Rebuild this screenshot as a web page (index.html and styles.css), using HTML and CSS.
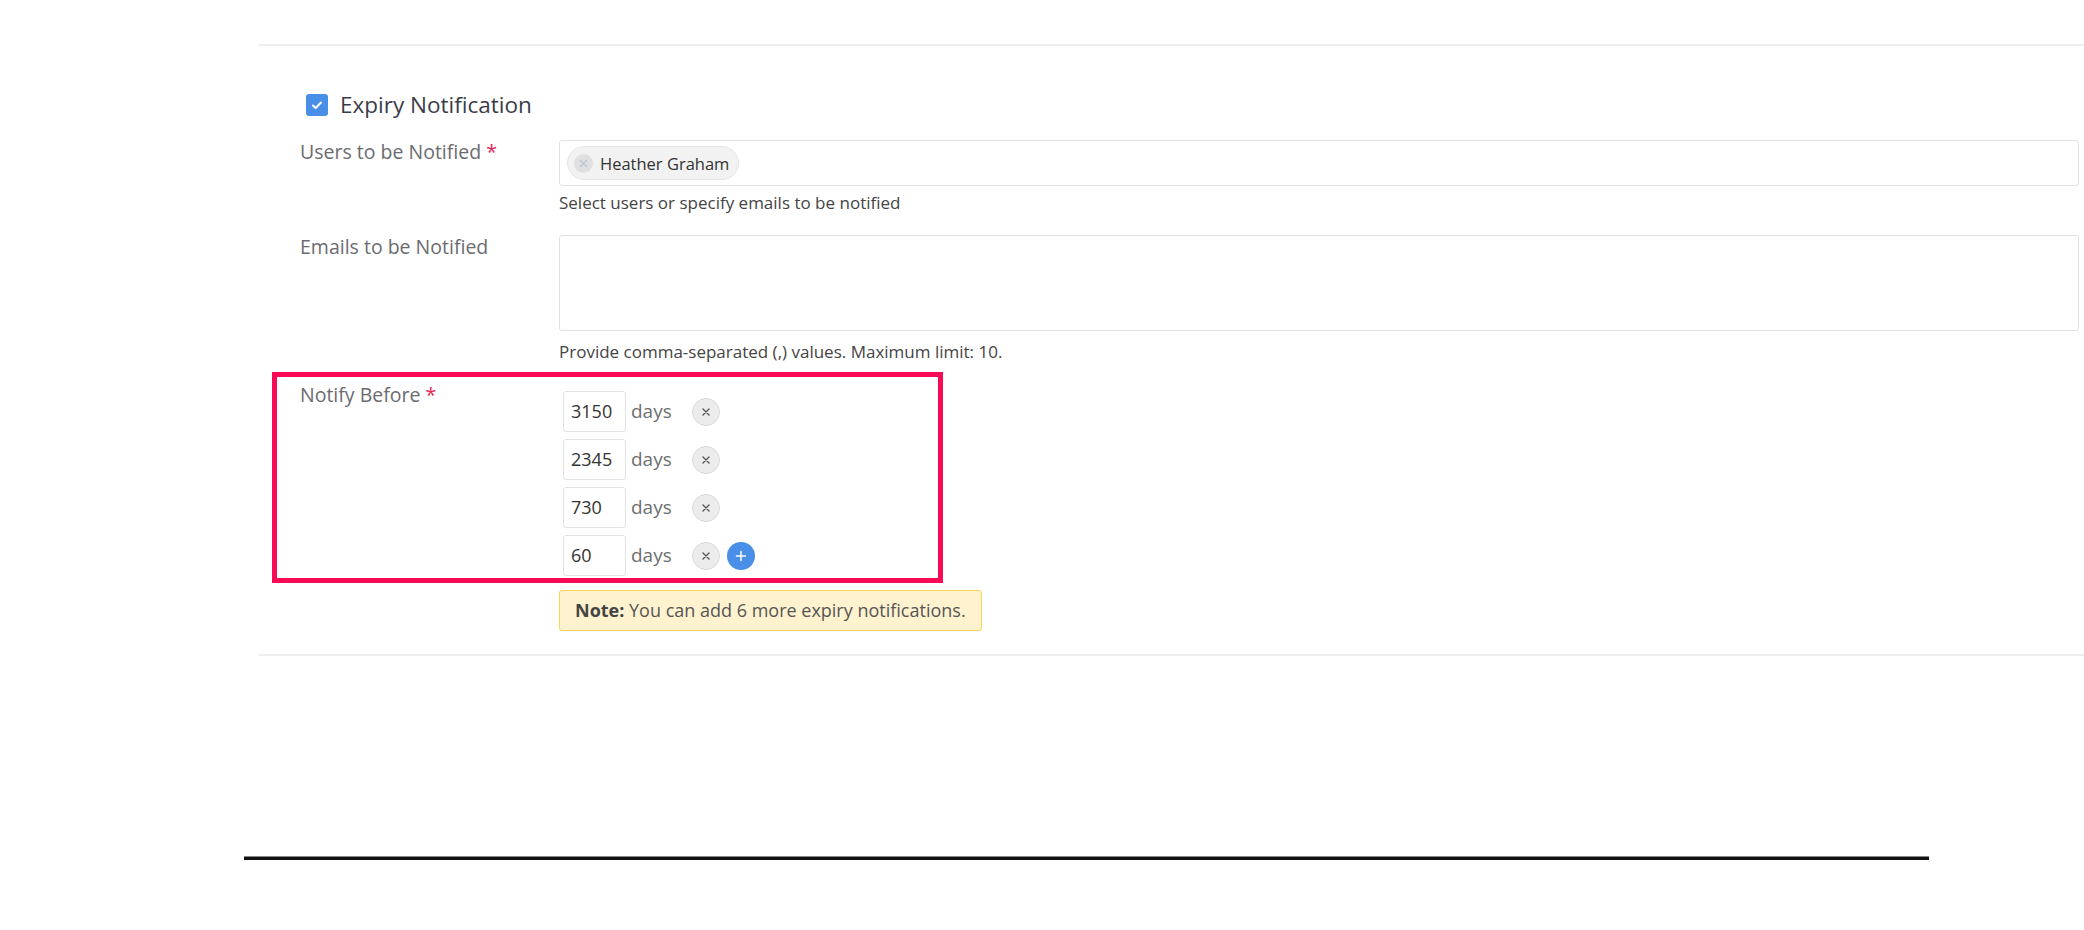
FILE: index.html
```html
<!DOCTYPE html>
<html lang="en">
<head>
    <meta charset="UTF-8">
    <meta name="viewport" content="width=device-width, initial-scale=1.0">
    <title>Expiry Notification</title>
    <link rel="stylesheet" href="styles.css">
</head>
<body>
    <div class="section">
        <div class="title-row">
            <span class="checkbox">
                <svg width="14" height="14" viewBox="0 0 14 14" fill="none" stroke="#fff" stroke-width="2" stroke-linecap="round" stroke-linejoin="round"><path d="M3 7.5l2.6 2.6L11 4.5"/></svg>
            </span>
            <span class="title">Expiry Notification</span>
        </div>

        <div class="field-row">
            <div class="label">Users to be Notified <span class="req">*</span></div>
            <div class="field">
                <div class="input chips">
                    <span class="chip">
                        <span class="chip-close">
                            <svg width="9" height="9" viewBox="0 0 9 9" stroke="#b9c6d3" stroke-width="1.4" stroke-linecap="round"><path d="M1.5 1.5l6 6M7.5 1.5l-6 6"/></svg>
                        </span>
                        Heather Graham
                    </span>
                </div>
                <div class="help">Select users or specify emails to be notified</div>
            </div>
        </div>

        <div class="field-row">
            <div class="label">Emails to be Notified</div>
            <div class="field">
                <div class="input textarea"></div>
                <div class="help help-wide">Provide comma-separated (,) values. Maximum limit: 10.</div>
            </div>
        </div>

        <div class="field-row notify-row">
            <div class="label">Notify Before <span class="req">*</span></div>
            <div class="field days-list">
                <div class="days-row">
                    <input class="num" type="text" value="3150">
                    <span class="unit">days</span>
                    <span class="round-btn remove"><svg width="10" height="10" viewBox="0 0 10 10" stroke="#555" stroke-width="1.3" stroke-linecap="round"><path d="M2 2l6 6M8 2l-6 6"/></svg></span>
                </div>
                <div class="days-row">
                    <input class="num" type="text" value="2345">
                    <span class="unit">days</span>
                    <span class="round-btn remove"><svg width="10" height="10" viewBox="0 0 10 10" stroke="#555" stroke-width="1.3" stroke-linecap="round"><path d="M2 2l6 6M8 2l-6 6"/></svg></span>
                </div>
                <div class="days-row">
                    <input class="num" type="text" value="730">
                    <span class="unit">days</span>
                    <span class="round-btn remove"><svg width="10" height="10" viewBox="0 0 10 10" stroke="#555" stroke-width="1.3" stroke-linecap="round"><path d="M2 2l6 6M8 2l-6 6"/></svg></span>
                </div>
                <div class="days-row">
                    <input class="num" type="text" value="60">
                    <span class="unit">days</span>
                    <span class="round-btn remove"><svg width="10" height="10" viewBox="0 0 10 10" stroke="#555" stroke-width="1.3" stroke-linecap="round"><path d="M2 2l6 6M8 2l-6 6"/></svg></span>
                    <span class="round-btn add"><svg width="12" height="12" viewBox="0 0 12 12" stroke="#fff" stroke-width="1.5" stroke-linecap="round"><path d="M6 1.5v9M1.5 6h9"/></svg></span>
                </div>
            </div>
            <div class="highlight"></div>
        </div>

        <div class="field-row note-row">
            <div></div>
            <div class="field">
                <div class="note"><b>Note:</b> You can add 6 more expiry notifications.</div>
            </div>
        </div>
    </div>

    <div class="rule"></div>
</body>
</html>
```

FILE: styles.css
```css
body {
    margin: 0;
    font-family: "Open Sans", "Noto Sans", sans-serif;
    background: #fff;
    color: #333;
}

.section {
    margin-left: 259px;
    margin-top: 44px;
    border-top: 2px solid #eeeeee;
    border-bottom: 2px solid #eeeeee;
    padding: 46px 5px 23px 41px;
}

.title-row {
    display: flex;
    align-items: center;
    height: 26px;
    padding-left: 6px;
    gap: 12px;
}

.checkbox {
    width: 22px;
    height: 22px;
    border-radius: 3px;
    background: #4a8fe7;
    display: flex;
    align-items: center;
    justify-content: center;
}

.title {
    font-size: 22.5px;
    line-height: 26px;
    color: #3b3c4a;
}

.field-row {
    display: grid;
    grid-template-columns: 259px 1fr;
    margin-top: 22px;
}

.label {
    font-size: 19.5px;
    line-height: 22px;
    padding-top: 1px;
    color: #6b6b70;
}

.req {
    color: #e8265a;
}

.input {
    border: 1px solid #e2e2e2;
    border-radius: 3px;
    box-sizing: border-box;
}

.chips {
    height: 46px;
    padding: 5px 7px;
    display: flex;
    align-items: center;
}

.chip {
    display: inline-flex;
    align-items: center;
    gap: 7px;
    height: 34px;
    box-sizing: border-box;
    padding: 0 9px 0 6px;
    background: #f2f2f2;
    border: 1px solid #e6e6e6;
    border-radius: 17px;
    font-size: 16.5px;
    color: #333;
}

.chip-close {
    width: 19px;
    height: 19px;
    border-radius: 50%;
    background: #e0e0e0;
    display: flex;
    align-items: center;
    justify-content: center;
}

.textarea {
    height: 96px;
}

.help {
    margin-top: 7px;
    font-size: 17px;
    line-height: 20px;
    color: #444;
}

.help-wide {
    margin-top: 11px;
}

.notify-row {
    position: relative;
}

.notify-row .label {
    padding-top: 0;
}

.days-list {
    padding-top: 7px;
}

.days-row {
    display: flex;
    align-items: center;
    height: 41px;
    margin-bottom: 7px;
}

.days-row:last-child {
    margin-bottom: 0;
}

.num {
    width: 63px;
    height: 41px;
    box-sizing: border-box;
    border: 1px solid #e3e3e3;
    border-radius: 3px;
    padding: 0 0 2px 7px;
    margin: 0 0 0 4px;
    font-family: inherit;
    font-size: 18px;
    color: #333;
    outline: none;
}

.unit {
    margin-left: 5px;
    width: 61px;
    font-size: 19px;
    color: #6f6f6f;
    padding-bottom: 2px;
}

.round-btn {
    width: 28px;
    height: 28px;
    box-sizing: border-box;
    border-radius: 50%;
    display: flex;
    align-items: center;
    justify-content: center;
}

.remove {
    background: #ececec;
    border: 1px solid #dadada;
}

.add {
    margin-left: 7px;
    background: #4a8fe7;
}

.highlight {
    position: absolute;
    left: -28px;
    top: -12px;
    width: 671px;
    height: 211px;
    box-sizing: border-box;
    border: 5px solid #fa0a55;
    pointer-events: none;
}

.note-row {
    margin-top: 0;
}

.note {
    display: inline-block;
    margin-top: 14px;
    height: 41px;
    box-sizing: border-box;
    padding: 0 15px;
    line-height: 39px;
    background: #fff3cf;
    border: 1px solid #f6d35a;
    border-radius: 3px;
    font-size: 18px;
    color: #555;
}

.note b {
    color: #444;
}

.rule {
    margin: 200px 0 0 244px;
    width: 1685px;
    height: 3px;
    background: #111;
    border-top: 1px solid #888;
}
```
